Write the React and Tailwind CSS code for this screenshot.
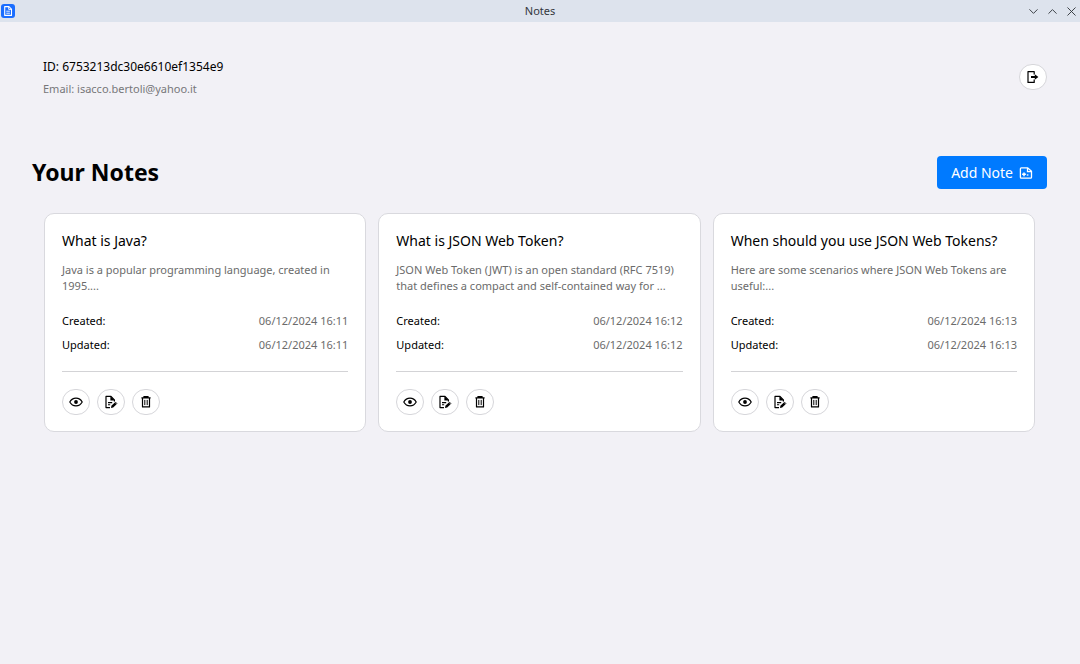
import { useState } from "react";
import { FiChevronDown, FiChevronUp, FiX } from "react-icons/fi";

const initialNotes = [
  {
    id: 1,
    title: "What is Java?",
    preview: "Java is a popular programming language, created in 1995....",
    created: "06/12/2024 16:11",
    updated: "06/12/2024 16:11",
  },
  {
    id: 2,
    title: "What is JSON Web Token?",
    preview: "JSON Web Token (JWT) is an open standard (RFC 7519) that defines a compact and self-contained way for ...",
    created: "06/12/2024 16:12",
    updated: "06/12/2024 16:12",
  },
  {
    id: 3,
    title: "When should you use JSON Web Tokens?",
    preview: "Here are some scenarios where JSON Web Tokens are useful:...",
    created: "06/12/2024 16:13",
    updated: "06/12/2024 16:13",
  },
]

const AppIcon = () => (
  <svg viewBox="0 0 14 14" className="size-3.5">
    <rect width="14" height="14" rx="3" fill="#1a6dff" />
    <path d="M3.7 2.6h4.2l2.6 2.6v6.2H3.7z" fill="none" stroke="#fff" strokeWidth="1.1" strokeLinejoin="round" />
    <path d="M7.7 2.8v2.6h2.6M5.3 7.2h3.6M5.3 9.2h3.6" fill="none" stroke="#fff" strokeWidth="0.9" />
  </svg>
)

const LogoutIcon = () => (
  <svg viewBox="0 0 14 14" className="size-3.5" fill="none" stroke="currentColor">
    <path d="M8.2 4.4V1.6H2v10.8h6.2V9.6" strokeWidth="1.2" strokeLinejoin="round" />
    <path d="M5 7h5" strokeWidth="2" />
    <path d="M8.8 4.3 12.4 7 8.8 9.7z" fill="currentColor" stroke="none" />
  </svg>
)

const AddNoteIcon = () => (
  <svg viewBox="0 0 14 14" className="size-3.5" fill="none" stroke="currentColor">
    <path d="M2.3 1.9h6.5l3.7 3.4v6q0 .9-.9.9H2.3q-.9 0-.9-.9V2.8q0-.9.9-.9z" strokeWidth="1.3" strokeLinejoin="round" />
    <path d="M8.5 2v3.6h4" strokeWidth="1.3" />
    <path d="M5 6.4v3.8M3.1 8.3h3.8" strokeWidth="1.5" />
    <path d="M7.8 9h1.6" strokeWidth="1.3" />
  </svg>
)

const EyeIcon = () => (
  <svg viewBox="0 0 14 14" className="size-3.5" fill="none" stroke="currentColor">
    <path d="M.8 7C2.2 4.4 4.5 3.1 7 3.1S11.8 4.4 13.2 7C11.8 9.6 9.500 10.9 7 10.9S2.2 9.6.8 7z" strokeWidth="1.2" />
    <circle cx="7" cy="7" r="1.9" fill="currentColor" stroke="none" />
  </svg>
)

const EditIcon = () => (
  <svg viewBox="0 0 14 14" className="size-3.5" fill="none" stroke="currentColor">
    <path d="M6 12.6H2V1.4h5l3.4 3.4v1.6" strokeWidth="1.2" strokeLinejoin="round" />
    <path d="M6.4 1v4.4H11z" fill="currentColor" stroke="none" />
    <path d="M4 7.6h4.2M4 9.8h2.2" strokeWidth="1.1" />
    <path d="m7 13 .4-2.2 3.4-3.4 1.8 1.8L9.200 12.600z" fill="currentColor" stroke="none" />
    <path d="m11.200 6.900 1.900 1.900" strokeWidth="1" />
  </svg>
)

const TrashIcon = () => (
  <svg viewBox="0 0 14 14" className="size-3.5" fill="none" stroke="currentColor">
    <path d="M2.4 2.8h9.2M5 2.3v-.6h4v.6" strokeWidth="1.2" />
    <path d="M3.5 3v8.900h7V3" strokeWidth="1.2" strokeLinejoin="round" />
    <path d="M5.800 4.900v5.200M8.200 4.900v5.200" strokeWidth="1" />
  </svg>
)

const RoundButton = ({ label, onClick, children }) => (
  <button
    aria-label={label}
    onClick={onClick}
    className="flex h-[26px] w-7 items-center justify-center rounded-full border border-[#d6d6da] bg-white text-black hover:bg-gray-100"
  >
    {children}
  </button>
)

const TitleBar = () => (
  <header className="grid h-[22px] grid-cols-[1fr_auto_1fr] items-center bg-[#dde3ed] px-px text-[#33373d]">
    <AppIcon />
    <span className="text-[11px]">Notes</span>
    <div className="flex items-center justify-end gap-1">
      <button aria-label="Minimize"><FiChevronDown className="size-[15px]" strokeWidth={1.5} /></button>
      <button aria-label="Maximize"><FiChevronUp className="size-[15px]" strokeWidth={1.5} /></button>
      <button aria-label="Close"><FiX className="size-[15px]" strokeWidth={1.5} /></button>
    </div>
  </header>
)

const NoteCard = ({ note, onDelete }) => (
  <article className="rounded-[10px] border border-[#d9d9de] bg-white px-4 pt-4 pb-4">
    <h2 className="px-px text-sm leading-[22px]">{note.title}</h2>
    <p className="mt-[10px] line-clamp-2 h-8 px-px text-[11px] leading-4 text-[#6b6b6b]">{note.preview}</p>

    <dl className="mt-[15px] px-px text-[11px] leading-6">
      <div className="flex justify-between">
        <dt>Created:</dt>
        <dd className="text-[#6b6b6b]">{note.created}</dd>
      </div>
      <div className="flex justify-between">
        <dt>Updated:</dt>
        <dd className="text-[#6b6b6b]">{note.updated}</dd>
      </div>
    </dl>

    <hr className="mx-px mt-[14px] border-[#d3d3d6]" />

    <div className="mt-[17px] flex gap-[7px] px-px">
      <RoundButton label="View note"><EyeIcon /></RoundButton>
      <RoundButton label="Edit note"><EditIcon /></RoundButton>
      <RoundButton label="Delete note" onClick={() => onDelete(note.id)}><TrashIcon /></RoundButton>
    </div>
  </article>
)

const App = () => {
  const [notes, setNotes] = useState(initialNotes)

  const handleDelete = (id) => {
    setNotes(notes => notes.filter(note => note.id !== id))
  }

  return (
    <div className="min-h-screen bg-[#f2f1f6] font-['Noto_Sans',sans-serif] text-black">
      <TitleBar />

      <main className="pt-[34px] pr-[33px] pl-8">
        <div className="flex items-start justify-between pl-[11px]">
          <div className="leading-[22px]">
            <p className="text-xs leading-[22px]">ID: 6753213dc30e6610ef1354e9</p>
            <p className="text-[11px] leading-[22px] text-[#77777a]">Email: isacco.bertoli@yahoo.it</p>
          </div>
          <div className="pt-2">
            <RoundButton label="Log out"><LogoutIcon /></RoundButton>
          </div>
        </div>

        <div className="mt-14 flex items-start justify-between">
          <h1 className="text-[23px] leading-8 font-bold">Your Notes</h1>
          <button className="flex h-[33px] items-center gap-1.5 rounded bg-[#007aff] px-3.5 text-sm text-white hover:bg-blue-600">
            Add Note
            <AddNoteIcon />
          </button>
        </div>

        <div className="mt-6 grid grid-cols-3 gap-3 px-3">
          {notes.map(note => <NoteCard key={note.id} note={note} onDelete={handleDelete} />)}
        </div>
      </main>
    </div>
  )
}

export default App
